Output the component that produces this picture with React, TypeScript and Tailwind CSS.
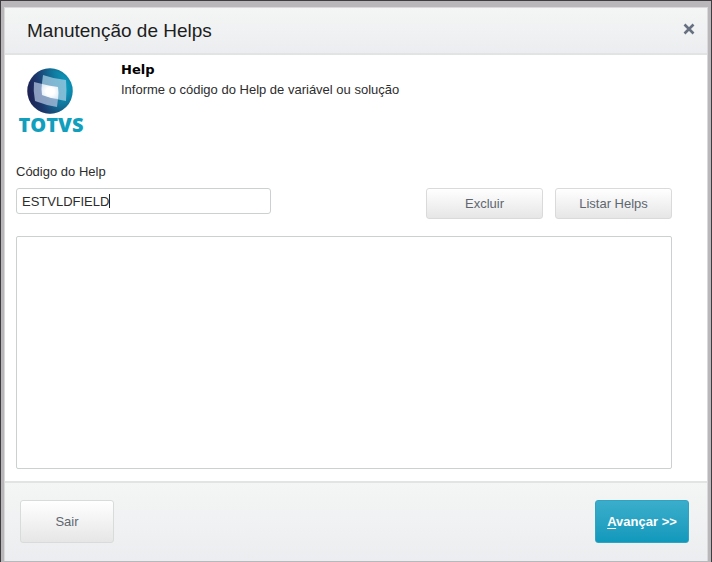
import { useState } from "react";
import type { ButtonHTMLAttributes } from "react";

function SmallButton({ className = "", ...props }: ButtonHTMLAttributes<HTMLButtonElement>) {
  return (
    <button
      type="button"
      className={`rounded-[3px] border border-[#d9dbdb] bg-linear-to-b from-white to-[#e6e6e6] text-[13px] text-[#606670] ${className}`}
      {...props}
    />
  );
}

function TotvsLogo() {
  return (
    <svg width="70" height="72" viewBox="0 0 70 72" role="img" aria-label="TOTVS">
      <defs>
        <linearGradient id="sphere" x1="0" y1="0.6" x2="1" y2="0.4">
          <stop offset="0" stopColor="#201a4c" />
          <stop offset="0.3" stopColor="#1c3c70" />
          <stop offset="0.65" stopColor="#107a9f" />
          <stop offset="1" stopColor="#08a5c5" />
        </linearGradient>
        <radialGradient id="shade" cx="0.5" cy="0.45" r="0.55">
          <stop offset="0.7" stopColor="#173665" stopOpacity="0" />
          <stop offset="1" stopColor="#173665" stopOpacity="0.4" />
        </radialGradient>
        <radialGradient id="glow" cx="0.5" cy="0.5" r="0.6">
          <stop offset="0.4" stopColor="#ffffff" />
          <stop offset="1" stopColor="#dcebf6" />
        </radialGradient>
      </defs>
      <circle cx="34" cy="23" r="22.7" fill="url(#sphere)" />
      <circle cx="34" cy="23" r="22.7" fill="url(#shade)" />
      <path d="M27 7 Q38 11 50 12 Q51 22 50 33 Q38 31 26 27 Q25 17 27 7Z" fill="#9fcbe2" fillOpacity="0.78" />
      <path d="M18 14 Q29 17 42 19 Q43 29 41 39 Q29 37 19 33 Q17 23 18 14Z" fill="#aabcda" fillOpacity="0.78" />
      <path d="M26 16 Q33 18 42 19 Q43 25 42 31 Q33 30 26 27 Q25 21 26 16Z" fill="url(#glow)" />
      <text
        x="35"
        y="64"
        textAnchor="middle"
        className="fill-[#119fbd] font-['Open_Sans',sans-serif] text-[20px] font-extrabold"
      >
        TOTVS
      </text>
    </svg>
  );
}

export default function App() {
  const [code, setCode] = useState("ESTVLDFIELD");

  return (
    <div className="h-screen border-x border-t border-[#403c40] bg-[#b9b7b9] px-[3px] pt-[6px] pb-px font-['Liberation_Sans',Arial,sans-serif] text-[13px] text-[#2d2d2d]">
      <main className="flex h-full flex-col border-x border-t border-[#d9d9dc] bg-white">
        <header className="flex h-[47px] shrink-0 items-center justify-between border-b-2 border-[#e2e4e4] bg-linear-to-b from-[#f4f6f5] to-[#ebedf0] pr-3 pl-[22px]">
          <h1 className="pt-px text-[19px] text-[#1d1d1d]">Manutenção de Helps</h1>
          <button type="button" aria-label="Fechar" className="pb-1">
            <svg width="12" height="12" viewBox="0 0 12 12" fill="none" stroke="#667080" strokeWidth="2.6">
              <path d="M1.5 1.5 L10.5 10.5 M10.5 1.5 L1.5 10.5" />
            </svg>
          </button>
        </header>

        <div className="flex grow flex-col pr-[35px] pb-3 pl-[11px]">
          <section className="flex h-[107px] shrink-0">
            <div className="w-[105px] pt-[13px]">
              <TotvsLogo />
            </div>
            <div className="pt-[5px]">
              <h2 className="font-['DejaVu_Sans',sans-serif] text-[13px] leading-5 font-bold text-black">Help</h2>
              <p className="leading-5">Informe o código do Help de variável ou solução</p>
            </div>
          </section>

          <label htmlFor="code" className="leading-5">
            Código do Help
          </label>
          <div className="mt-[6px] flex items-start">
            <div className="relative w-[255px]">
              <input
                id="code"
                value={code}
                onChange={(e) => setCode(e.target.value)}
                className="h-[26px] w-full rounded-[3px] border border-[#cbd1d0] px-[5px] outline-none"
              />
              <span className="absolute top-[6px] left-[93px] h-[14px] w-px bg-[#222]" />
            </div>
            <div className="ml-auto flex gap-3">
              <SmallButton className="h-[31px] w-[117px]">Excluir</SmallButton>
              <SmallButton className="h-[31px] w-[117px]">Listar Helps</SmallButton>
            </div>
          </div>
          <textarea
            aria-label="Texto do Help"
            className="mt-[17px] w-full grow resize-none rounded-[2px] border border-[#cbd1d0] outline-none"
          />
        </div>

        <footer className="flex h-[80px] shrink-0 items-center justify-between border-t-2 border-[#e2e4e4] bg-linear-to-b from-[#f4f6f5] to-[#ebedf0] pr-[18px] pb-px pl-[15px]">
          <SmallButton className="h-[43px] w-[94px]">Sair</SmallButton>
          <button
            type="button"
            className="h-[43px] w-[94px] rounded-[3px] border border-[#2fa3c2] bg-linear-to-b from-[#3aadcb] to-[#0f99bc] text-[13px] font-bold text-white"
          >
            <span className="underline underline-offset-2">A</span>vançar &gt;&gt;
          </button>
        </footer>
      </main>
    </div>
  );
}
